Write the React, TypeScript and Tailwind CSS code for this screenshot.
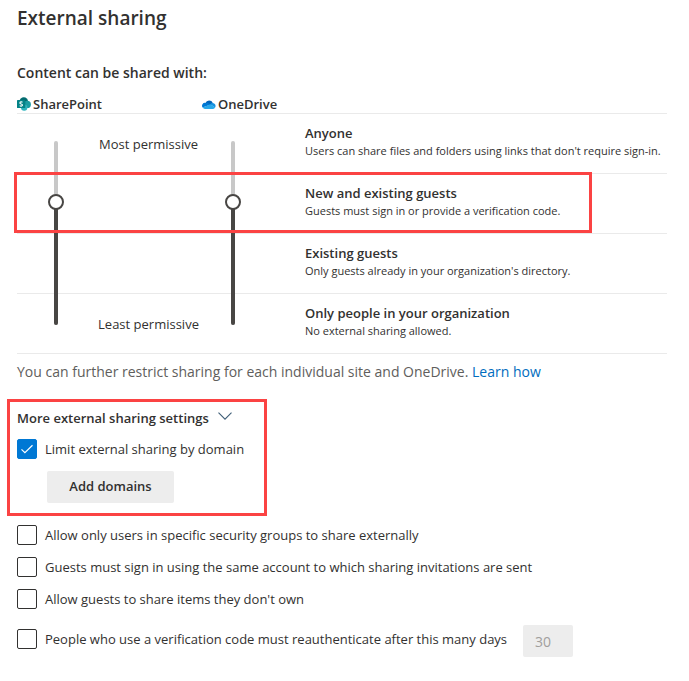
import { useState } from 'react';

const levels = [
  {
    title: 'Anyone',
    text: "Users can share files and folders using links that don't require sign-in.",
    hint: 'Most permissive',
    row: 'row-start-1',
  },
  {
    title: 'New and existing guests',
    text: 'Guests must sign in or provide a verification code.',
    row: 'row-start-2',
    highlighted: true,
  },
  {
    title: 'Existing guests',
    text: "Only guests already in your organization's directory.",
    row: 'row-start-3',
  },
  {
    title: 'Only people in your organization',
    text: 'No external sharing allowed.',
    hint: 'Least permissive',
    row: 'row-start-4',
  },
];

const restrictions = [
  'Allow only users in specific security groups to share externally',
  'Guests must sign in using the same account to which sharing invitations are sent',
  "Allow guests to share items they don't own",
];

function SharePointIcon() {
  return (
    <svg viewBox="0 0 14 14" className="h-3.5 w-3.5 shrink-0" aria-hidden="true">
      <circle cx="6.8" cy="4.4" r="4.2" fill="#036c70" />
      <circle cx="10.2" cy="7.4" r="3.7" fill="#1a9ba1" />
      <circle cx="7.2" cy="10.6" r="3.2" fill="#2fb4bd" />
      <path d="M4 3h4.4v8H4z" fill="#03585c" opacity="0.4" />
      <rect x="0" y="3" width="8" height="8" rx="0.6" fill="#038387" />
      <path
        d="M5.5 5.2C4.8 4.7 2.9 4.7 2.9 5.9c0 1.2 2.6.9 2.6 2.2 0 1.3-2 1.3-2.8.6"
        fill="none"
        stroke="#fff"
        strokeWidth="1.1"
      />
    </svg>
  );
}

function OneDriveIcon() {
  return (
    <svg viewBox="0 0 14 9" className="h-[9px] w-3.5 shrink-0" aria-hidden="true">
      <path d="M3.4 3.1A4 4 0 0 1 10.8 3L8.2 5.2z" fill="#0364b8" />
      <path d="M3.4 2.9A3 3 0 0 0 .6 7.6L9 4.6 6 3.1a4 4 0 0 0-2.6-.2z" fill="#0078d4" />
      <path d="M10.8 3a3 3 0 0 0-2.6 1.3l4.9 3.1A2.9 2.9 0 0 0 10.8 3z" fill="#1490df" />
      <path d="M.6 7.6A3 3 0 0 0 3 8.9h8a2.9 2.9 0 0 0 2.2-1.5L8.4 4.2z" fill="#28a8ea" />
    </svg>
  );
}

function Slider({ label, value, onChange }: { label: string; value: number; onChange: (v: number) => void }) {
  return (
    <div className="relative mx-auto mt-[19px] h-[200px] w-4">
      <div className="absolute inset-x-1.5 inset-y-2 overflow-hidden rounded-sm bg-[#c8c8c8]">
        <div className="absolute inset-x-0 bottom-0 bg-[#484644]" style={{ height: `${(value / 3) * 100}%` }} />
      </div>
      <input
        type="range"
        min={0}
        max={3}
        value={value}
        aria-label={label}
        onChange={e => onChange(Number(e.target.value))}
        className="absolute inset-0 m-0 h-full w-4 cursor-pointer appearance-none bg-transparent [direction:rtl] [writing-mode:vertical-lr] [&::-webkit-slider-thumb]:h-4 [&::-webkit-slider-thumb]:w-4 [&::-webkit-slider-thumb]:appearance-none [&::-webkit-slider-thumb]:rounded-full [&::-webkit-slider-thumb]:border-2 [&::-webkit-slider-thumb]:border-[#484644] [&::-webkit-slider-thumb]:bg-white"
      />
    </div>
  );
}

function Checkbox({ label, defaultChecked }: { label: string; defaultChecked?: boolean }) {
  return (
    <label className="flex items-center gap-2 text-[13px] leading-5">
      <span className="relative h-5 w-5 shrink-0">
        <input
          type="checkbox"
          defaultChecked={defaultChecked}
          className="peer block h-5 w-5 appearance-none rounded-xs border border-[#323130] checked:border-[#0078d4] checked:bg-[#0078d4]"
        />
        <svg viewBox="0 0 20 20" className="pointer-events-none absolute inset-0 hidden h-5 w-5 peer-checked:block">
          <path d="M4.5 10.3l3.4 3.4 7.6-7.4" fill="none" stroke="#fff" strokeWidth="1.2" />
        </svg>
      </span>
      {label}
    </label>
  );
}

export default function App() {
  const [sharePoint, setSharePoint] = useState(2);
  const [oneDrive, setOneDrive] = useState(2);
  const [open, setOpen] = useState(true);

  return (
    <main className="min-h-screen bg-white pt-1 pr-[22px] pb-6 pl-[17px] font-['Open_Sans',sans-serif] text-[13px] text-[#323130]">
      <h1 className="text-[19px] leading-7 font-semibold">External sharing</h1>
      <h2 className="mt-[31px] text-sm leading-5 font-semibold">Content can be shared with:</h2>

      <div className="mt-3 grid grid-cols-[78px_107px_62px_1fr] border-b border-[#eaeaea] leading-[18px] font-semibold">
        <div className="col-span-2 flex items-center gap-0.5">
          <SharePointIcon />
          SharePoint
        </div>
        <div className="col-span-2 flex items-center gap-0.5">
          <OneDriveIcon />
          OneDrive
        </div>
      </div>

      <div className="grid grid-cols-[78px_107px_62px_1fr] grid-rows-[repeat(4,60px)]">
        {levels.map(level => (
          <div
            key={level.title}
            className={`relative col-span-full grid grid-cols-subgrid border-b border-[#eaeaea] ${level.row}`}
          >
            <div className="col-start-2 self-center text-center leading-5">{level.hint}</div>
            <div className="col-start-4 pt-[9px] pl-[41px] whitespace-nowrap">
              <h3 className="leading-5 font-semibold">{level.title}</h3>
              <p className="text-[11px] leading-4">{level.text}</p>
            </div>
            {level.highlighted && (
              <div className="pointer-events-none absolute -top-0.5 -left-[3px] z-20 h-[61px] w-[578px] border-3 border-[#fb4343]" />
            )}
          </div>
        ))}
        <div className="z-10 col-start-1 row-span-4 row-start-1">
          <Slider label="SharePoint" value={sharePoint} onChange={setSharePoint} />
        </div>
        <div className="z-10 col-start-3 row-span-4 row-start-1">
          <Slider label="OneDrive" value={oneDrive} onChange={setOneDrive} />
        </div>
      </div>

      <p className="mt-2 text-sm leading-5 text-[#605e5c]">
        You can further restrict sharing for each individual site and OneDrive.{' '}
        <a href="#" className="text-[#006cbe]">Learn how</a>
      </p>

      <section className="mt-[17px] -ml-2.5 w-[260px] border-3 border-[#fb4343] px-[7px] pt-1.5 pb-2.5">
        <button onClick={() => setOpen(!open)} className="flex items-center gap-2 leading-5 font-semibold">
          More external sharing settings
          <svg viewBox="0 0 16 12" className="h-3 w-4" aria-hidden="true">
            <path d="M1.5.7L8 7.2 14.5.7" fill="none" stroke="#3f5f78" strokeWidth="1.1" />
          </svg>
        </button>
        {open && (
          <>
            <div className="mt-[11px]">
              <Checkbox label="Limit external sharing by domain" defaultChecked />
            </div>
            <button className="mt-3 ml-[30px] block h-8 w-[127px] rounded-xs bg-[#ededed] font-semibold">
              Add domains
            </button>
          </>
        )}
      </section>

      <div className="mt-[9px] flex flex-col gap-3">
        {restrictions.map(text => (
          <Checkbox key={text} label={text} />
        ))}
      </div>

      <div className="mt-4 flex items-start gap-4">
        <div className="pt-1">
          <Checkbox label="People who use a verification code must reauthenticate after this many days" />
        </div>
        <input
          type="text"
          disabled
          defaultValue="30"
          aria-label="Days"
          className="h-8 w-[50px] rounded-xs bg-[#ededed] px-3 text-sm text-[#a19f9d]"
        />
      </div>
    </main>
  );
}
